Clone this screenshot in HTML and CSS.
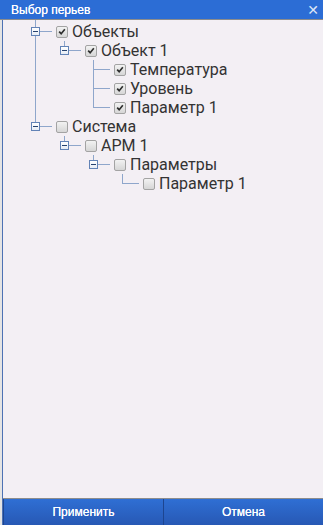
FILE: index.html
```html
<!DOCTYPE html>
<html>
<head>
    <title>Выбор перьев</title>
    <meta charset="UTF-8">
    <link rel="stylesheet" href="styles.css">
</head>
<body>
    <div class="dialog">
        <div class="dialog-header">
            <span class="dialog-title">Выбор перьев</span>
            <span class="close-btn">&#x2715;</span>
        </div>

        <div class="dialog-body">
            <ul class="tree root">
                <li>
                    <div class="row"><span class="conn expander"></span><span class="chk checked"><svg viewBox="0 0 12 12"><path d="M2.6 6.2 L5 8.6 L9.4 3.4"/></svg></span><span class="label">Объекты</span></div>
                    <ul class="tree">
                        <li>
                            <div class="row"><span class="conn expander"></span><span class="chk checked"><svg viewBox="0 0 12 12"><path d="M2.6 6.2 L5 8.6 L9.4 3.4"/></svg></span><span class="label">Объект 1</span></div>
                            <ul class="tree">
                                <li><div class="row"><span class="conn"></span><span class="chk checked"><svg viewBox="0 0 12 12"><path d="M2.6 6.2 L5 8.6 L9.4 3.4"/></svg></span><span class="label">Температура</span></div></li>
                                <li><div class="row"><span class="conn"></span><span class="chk checked"><svg viewBox="0 0 12 12"><path d="M2.6 6.2 L5 8.6 L9.4 3.4"/></svg></span><span class="label">Уровень</span></div></li>
                                <li><div class="row"><span class="conn"></span><span class="chk checked"><svg viewBox="0 0 12 12"><path d="M2.6 6.2 L5 8.6 L9.4 3.4"/></svg></span><span class="label">Параметр 1</span></div></li>
                            </ul>
                        </li>
                    </ul>
                </li>
                <li>
                    <div class="row"><span class="conn expander"></span><span class="chk"></span><span class="label">Система</span></div>
                    <ul class="tree">
                        <li>
                            <div class="row"><span class="conn expander"></span><span class="chk"></span><span class="label">АРМ 1</span></div>
                            <ul class="tree">
                                <li>
                                    <div class="row"><span class="conn expander"></span><span class="chk"></span><span class="label">Параметры</span></div>
                                    <ul class="tree">
                                        <li><div class="row"><span class="conn"></span><span class="chk"></span><span class="label">Параметр 1</span></div></li>
                                    </ul>
                                </li>
                            </ul>
                        </li>
                    </ul>
                </li>
            </ul>
        </div>

        <div class="dialog-footer">
            <button class="footer-btn apply-btn">Применить</button>
            <button class="footer-btn cancel-btn">Отмена</button>
        </div>
    </div>
</body>
</html>
```

FILE: styles.css
```css
html, body {
    margin: 0;
    padding: 0;
    height: 100%;
}

body {
    background-color: #e4e4e4;
    font-family: Roboto, "Liberation Sans", sans-serif;
}

.dialog {
    display: flex;
    flex-direction: column;
    height: 525px;
    margin-left: 2px;
    border-left: 1px solid #4d72b4;
    background-color: #f3eff4;
}

/* Header */
.dialog-header {
    display: flex;
    justify-content: space-between;
    align-items: center;
    height: 19px;
    margin-left: -3px;
    padding: 0 4px 0 11px;
    background-color: #2c6dd5;
    border-bottom: 1px solid #8c8c8c;
    color: white;
}

.dialog-title {
    font-family: "Liberation Sans", Arial, sans-serif;
    font-size: 12px;
    text-shadow: 0 0 0.4px #ffffff;
}

.close-btn {
    font-family: "DejaVu Sans", sans-serif;
    font-size: 14px;
    line-height: 1;
    color: #dce5f7;
}

/* Tree */
.dialog-body {
    flex: 1;
    padding-top: 2px;
    padding-left: 25px;
}

.tree {
    list-style: none;
    margin: 0;
    padding: 0;
}

.tree .tree {
    padding-left: 29px;
}

.tree li {
    position: relative;
}

.tree li::before {
    content: '';
    position: absolute;
    left: 7px;
    top: 0;
    bottom: 0;
    border-left: 1px solid #8ea6cb;
}

.tree li:last-child::before {
    bottom: auto;
    height: 10px;
}

.root > li:first-child::before {
    top: -2px;
}

.row {
    display: flex;
    align-items: center;
    height: 19px;
}

.conn {
    position: relative;
    width: 28px;
    height: 19px;
    flex-shrink: 0;
}

.conn::after {
    content: '';
    position: absolute;
    left: 7px;
    right: 4px;
    top: 9px;
    border-top: 1px solid #8ea6cb;
}

.expander::before {
    content: '';
    position: absolute;
    z-index: 1;
    left: 3px;
    top: 5px;
    width: 7px;
    height: 7px;
    border: 1px solid #6283b6;
    background-image:
        linear-gradient(#26426f, #26426f),
        linear-gradient(#ffffff, #e6ecf5);
    background-size: 5px 1px, 100% 100%;
    background-position: 1px 3px, 0 0;
    background-repeat: no-repeat;
}

.chk {
    display: flex;
    align-items: center;
    justify-content: center;
    box-sizing: border-box;
    width: 12px;
    height: 12px;
    flex-shrink: 0;
    border: 1px solid #a3a3a3;
    border-radius: 2px;
    background: linear-gradient(#f2f2f2, #d6d6d6);
}

.chk svg {
    display: none;
    width: 11px;
    height: 11px;
}

.chk.checked svg {
    display: block;
}

.chk svg path {
    fill: none;
    stroke: #2e2e2e;
    stroke-width: 2;
}

.label {
    margin-left: 4px;
    font-size: 16px;
    color: #333333;
    white-space: nowrap;
}

/* Footer */
.dialog-footer {
    display: flex;
    height: 26px;
    border-top: 1px solid #8c8c8c;
}

.footer-btn {
    flex: 1;
    margin: 0;
    padding: 0;
    border: none;
    border-left: 1px solid #1d4590;
    background: linear-gradient(#2f6fd4, #2758b4);
    color: white;
    font-family: "Liberation Sans", Arial, sans-serif;
    font-size: 12px;
    text-shadow: 0 0 0.5px #ffffff;
    cursor: pointer;
}

.apply-btn {
    flex: 0 0 160px;
}
```
